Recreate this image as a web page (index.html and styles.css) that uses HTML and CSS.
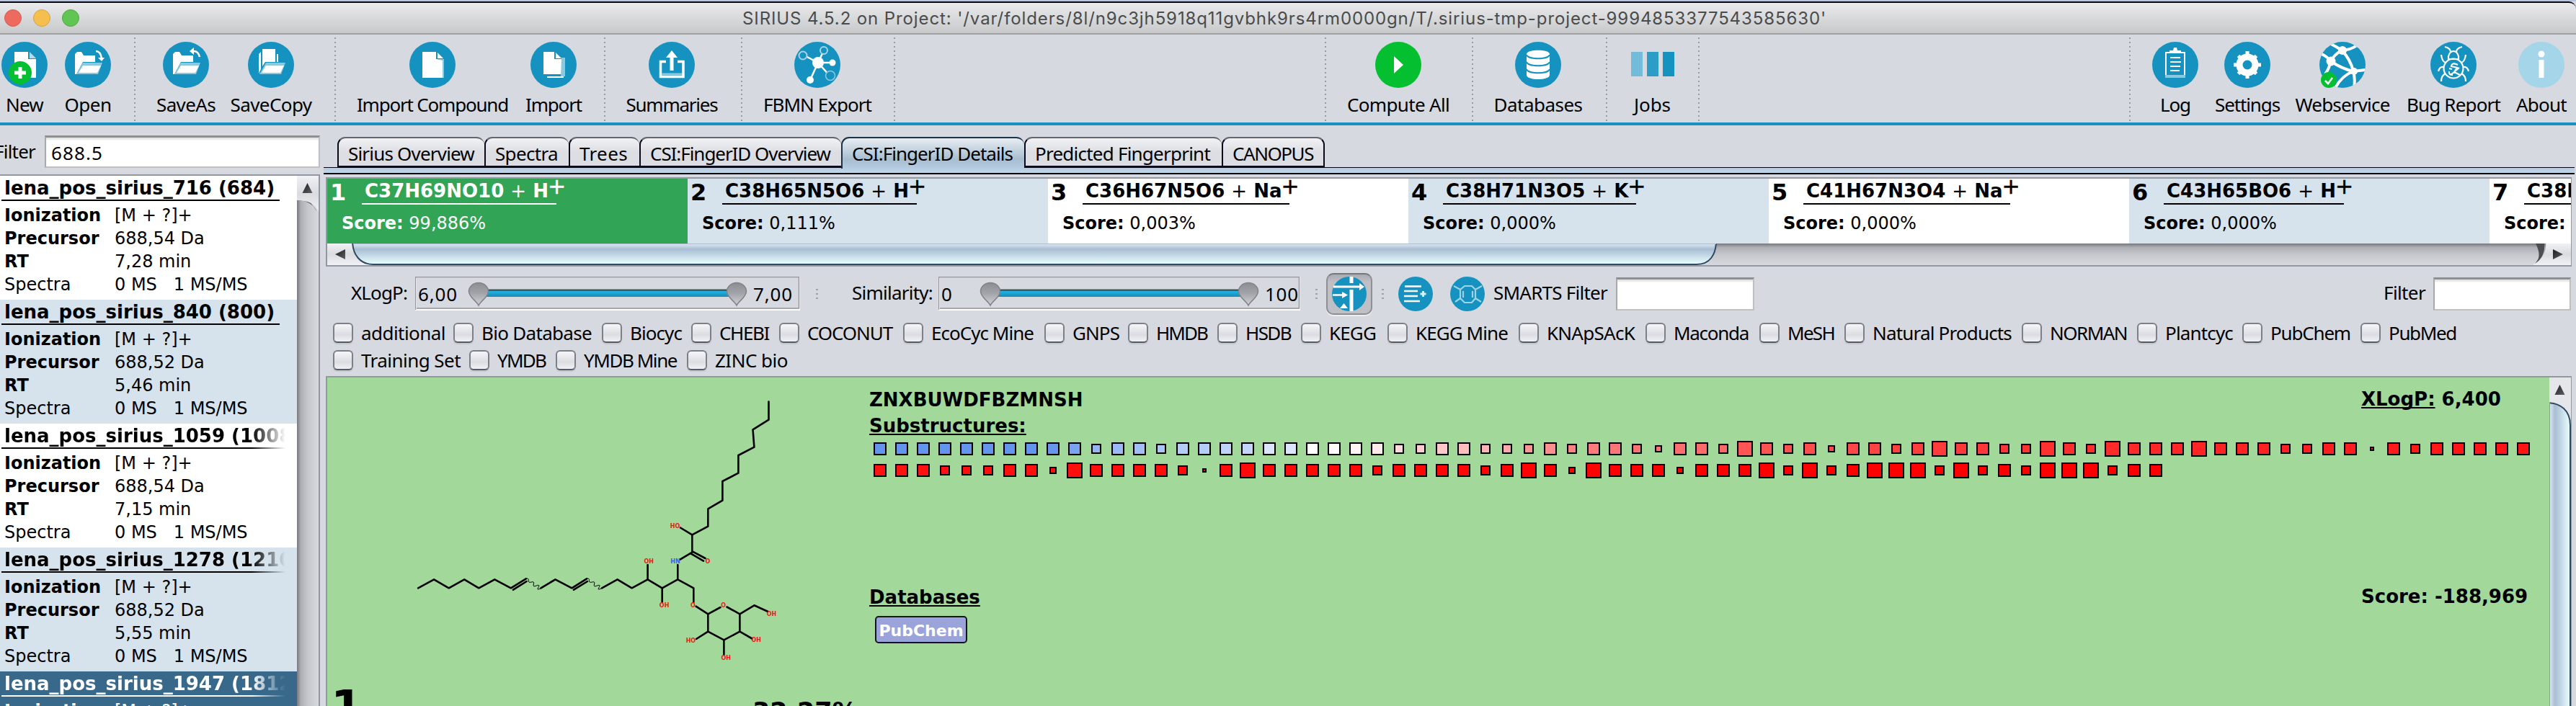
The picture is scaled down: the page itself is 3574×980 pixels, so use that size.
FILE: index.html
```html
<!DOCTYPE html>
<html lang="en">
<head>
<meta charset="utf-8">
<title>SIRIUS 4.5.2</title>
<link rel="stylesheet" href="styles.css">
</head>
<body>
<svg width="0" height="0" class="defs">
  <defs>
    <linearGradient id="bar" x1="0" y1="0" x2="0" y2="1"><stop offset="0" stop-color="#22b4e6"/><stop offset="1" stop-color="#1a8ab5"/></linearGradient>
    <linearGradient id="knob" x1="0" y1="0" x2="0" y2="1"><stop offset="0" stop-color="#8c8d91"/><stop offset=".45" stop-color="#a2a3a8"/><stop offset="1" stop-color="#d2d3d8"/></linearGradient>
    <linearGradient id="thumbH" x1="0" y1="0" x2="0" y2="1"><stop offset="0" stop-color="#f4f8fb"/><stop offset=".14" stop-color="#dbe7f1"/><stop offset=".36" stop-color="#a9bed3"/><stop offset="1" stop-color="#eaffff"/></linearGradient>
    <linearGradient id="thumbV" x1="0" y1="0" x2="1" y2="0"><stop offset="0" stop-color="#f4f8fb"/><stop offset=".14" stop-color="#dbe7f1"/><stop offset=".36" stop-color="#a9bed3"/><stop offset="1" stop-color="#eaffff"/></linearGradient>
    <linearGradient id="trackH" x1="0" y1="0" x2="0" y2="1"><stop offset="0" stop-color="#77797e"/><stop offset=".18" stop-color="#adafb4"/><stop offset=".5" stop-color="#c5c7cc"/><stop offset="1" stop-color="#d6d9df"/></linearGradient>
    <linearGradient id="trackV" x1="0" y1="0" x2="1" y2="0"><stop offset="0" stop-color="#77797e"/><stop offset=".18" stop-color="#adafb4"/><stop offset=".5" stop-color="#c5c7cc"/><stop offset="1" stop-color="#d6d9df"/></linearGradient>
    <linearGradient id="btn" x1="0" y1="0" x2="0" y2="1"><stop offset="0" stop-color="#f0f1f4"/><stop offset=".5" stop-color="#d9dbdf"/><stop offset="1" stop-color="#f1f2f4"/></linearGradient>
    <linearGradient id="arrow" x1="0" y1="0" x2="1" y2="1"><stop offset="0" stop-color="#1d1d1f"/><stop offset="1" stop-color="#5e6063"/></linearGradient>
    <path id="knobShape" d="M0 38.500C-3 32-13.500 27-13.500 19A13.500 12 0 0 1 13.500 19C13.500 27 3 32 0 38.500Z" fill="url(#knob)" stroke="#828388" stroke-width="1.500"/>
  </defs>
</svg>
<div class="window">
  <header class="titlebar">
    <div class="lights"><i class="light red"></i><i class="light yellow"></i><i class="light green"></i></div>
    <div class="caption" data-w="1501">SIRIUS 4.5.2 on Project: '/var/folders/8l/n9c3jh5918q11gvbhk9rs4rm0000gn/T/.sirius-tmp-project-9994853377543585630'</div>
  </header>

  <nav class="toolbar">
    <div class="tool"><svg viewBox="0 0 64 64"><circle cx="32" cy="32" r="32" fill="#1592c0"/><path d="M18 14H37V24H48V50H18Z" fill="#fff"/><path d="M39 14L48 23H39Z" fill="#b8dbe9"/><circle cx="26" cy="43" r="16" fill="#04c031"/><path d="M26 35V51M18 43H34" stroke="#fff" stroke-width="5"/></svg><span data-w="49">New</span></div>
    <div class="tool"><svg viewBox="0 0 64 64"><circle cx="32" cy="32" r="32" fill="#1592c0"/><path d="M14 17L17 14H23L26 19H42V28H25L16 45H14Z" fill="#fff"/><path d="M25 29H52L46 45H16Z" fill="#8cc8de"/><path d="M25 33H50L45 43H19Z" fill="#fff"/><path d="M43 13C48 13 50 17 51 23" fill="none" stroke="#fff" stroke-width="2.500"/><path d="M46 22H55L51 27Z" fill="#fff"/></svg><span data-w="62">Open</span></div>
    <i class="sep"></i>
    <div class="tool"><svg viewBox="0 0 64 64"><circle cx="32" cy="32" r="32" fill="#1592c0"/><path d="M14 17L17 14H23L26 19H42V28H25L16 45H14Z" fill="#fff"/><path d="M25 29H52L46 45H16Z" fill="#8cc8de"/><path d="M25 33H50L45 43H19Z" fill="#fff"/><path d="M43 13C48 13 50 17 51 21" fill="none" stroke="#fff" stroke-width="2.500"/><path d="M43 8V18L37 13Z" fill="#fff"/></svg><span data-w="79">SaveAs</span></div>
    <div class="tool"><svg viewBox="0 0 64 64"><circle cx="32" cy="32" r="32" fill="#1592c0"/><path d="M20 10H38V28H24L20 34ZM15 17L18 14V38L15 44ZM40 17H42V28H40Z" fill="#fff"/><path d="M25 29H52L46 45H16Z" fill="#8cc8de"/><path d="M25 33H50L45 43H19Z" fill="#fff"/></svg><span data-w="110">SaveCopy</span></div>
    <i class="sep"></i>
    <div class="tool"><svg viewBox="0 0 64 64"><circle cx="32" cy="32" r="32" fill="#1592c0"/><path d="M18 14H37V24H47V50H18Z" fill="#fff"/><path d="M39 15L47 23H39Z" fill="#fff"/><path d="M37 24H48V50H46V26Z" fill="#8cc8de"/></svg><span data-w="207">Import Compound</span></div>
    <div class="tool"><svg viewBox="0 0 64 64"><circle cx="32" cy="32" r="32" fill="#1592c0"/><path d="M18 14H33V24H43V45H18Z" fill="#fff"/><path d="M35 15L43 23H35Z" fill="#fff"/><path d="M43 22H48V48H42Z" fill="#8cc8de"/><path d="M23 49H46" stroke="#fff" stroke-width="2"/></svg><span data-w="75">Import</span></div>
    <i class="sep"></i>
    <div class="tool"><svg viewBox="0 0 64 64"><circle cx="32" cy="32" r="32" fill="#1592c0"/><path d="M24 27.500H16.500V48.500H48V27.500H40" fill="none" stroke="#fff" stroke-width="3.500"/><path d="M18 45H46" stroke="#8cc8de" stroke-width="3"/><path d="M32 20V40" stroke="#fff" stroke-width="5"/><path d="M24 22L32 12L40 22Z" fill="#fff"/></svg><span data-w="124">Summaries</span></div>
    <i class="sep"></i>
    <div class="tool"><svg viewBox="0 0 64 64"><circle cx="32" cy="32" r="32" fill="#1592c0"/><path d="M33 29L14 19M33 29L40 14M33 29L54 29M33 29L22 53M33 29L49 47" stroke="#fff" stroke-width="2.500"/><circle cx="33" cy="29" r="8" fill="#fff"/><circle cx="53" cy="29" r="4.500" fill="#fff"/><circle cx="22" cy="53" r="5" fill="#fff"/><circle cx="12" cy="19" r="5.500" fill="#1592c0" stroke="#a6d4e6" stroke-width="2"/><circle cx="41" cy="12" r="5" fill="#1592c0" stroke="#a6d4e6" stroke-width="2"/><circle cx="50" cy="47" r="6.500" fill="#1592c0" stroke="#8cc8de" stroke-width="1.500"/></svg><span data-w="147">FBMN Export</span></div>
    <i class="sep"></i>
    <i></i>
    <i class="sep"></i>
    <div class="tool"><svg viewBox="0 0 64 64"><circle cx="32" cy="32" r="32" fill="#04c031"/><path d="M26 20L39 32L26 44Z" fill="#fff"/></svg><span data-w="139">Compute All</span></div>
    <i class="sep"></i>
    <div class="tool"><svg viewBox="0 0 64 64"><circle cx="32" cy="32" r="32" fill="#1592c0"/><path d="M16 17C16 10 48 10 48 17V46C48 54 16 54 16 46Z" fill="#fff"/><path d="M16 18C18 25 46 25 48 18M16 28C18 35 46 35 48 28M16 38C18 45 46 45 48 38" fill="none" stroke="#1592c0" stroke-width="2"/></svg><span data-w="120">Databases</span></div>
    <i class="sep"></i>
    <div class="tool"><svg viewBox="0 0 64 64"><path d="M2 14H18V48H2Z" fill="#73bcd9"/><path d="M24 14H40V48H24Z" fill="#2c9dc6"/><path d="M46 14H62V48H46Z" fill="#1592c0"/></svg><span data-w="48">Jobs</span></div>
    <i class="sep"></i>
    <i></i>
    <i class="sep"></i>
    <div class="tool"><svg viewBox="0 0 64 64"><circle cx="32" cy="32" r="32" fill="#1592c0"/><path d="M19 14V49M45 14V49M18 15H24M40 15H46" stroke="#fff" stroke-width="2" fill="none"/><path d="M18 46H46V50H18Z" fill="#8cc8de"/><path d="M24 16V12H29L30 8H34L35 12H40V16Z" fill="#fff"/><path d="M25 22H39M25 28H40M25 34H39M25 40H38" stroke="#fff" stroke-width="2"/></svg><span data-w="39">Log</span></div>
    <div class="tool"><svg viewBox="0 0 64 64"><circle cx="32" cy="32" r="32" fill="#1592c0"/><circle cx="32" cy="32" r="15.500" fill="#fff"/><path d="M32 13V51M13 32H51" stroke="#fff" stroke-width="5"/><path d="M19.500 19.500L44.500 44.500M44.500 19.500L19.500 44.500" stroke="#fff" stroke-width="5"/><circle cx="32" cy="32" r="6.500" fill="#1592c0"/></svg><span data-w="87">Settings</span></div>
    <div class="tool"><svg viewBox="0 0 64 64"><clipPath id="globe"><circle cx="32" cy="32" r="32"/></clipPath><g clip-path="url(#globe)"><rect width="64" height="64" fill="#1592c0"/><path d="M16 3Q24 7 31 12Q44 11 52 5M31 12Q21 17 16 27Q10 20 3 17M16 27Q13 38 8 45M16 27Q30 37 47 41Q43 24 31 12M47 41L64 39M47 41Q31 47 22 64M47 41Q50 51 48 64" stroke="#fff" stroke-width="4" fill="none"/><circle cx="32" cy="12" r="6" fill="#fff"/><circle cx="16" cy="27" r="6.500" fill="#fff"/><circle cx="48" cy="41" r="5" fill="#fff"/></g><circle cx="13" cy="53" r="11" fill="#04c031"/><path d="M8 54L12 58L18 50" stroke="#fff" stroke-width="2.500" fill="none"/></svg><span data-w="128">Webservice</span></div>
    <div class="tool"><svg viewBox="0 0 64 64"><circle cx="32" cy="32" r="32" fill="#1592c0"/><g fill="none" stroke="#fff" stroke-width="2.200"><circle cx="32" cy="37" r="13.500"/><path d="M25 24V20Q27 13 32 13Q37 13 39 20V24ZM28 14Q28 9 20 7M36 14Q36 9 44 7M21 29Q16 27 15 18M43 29Q48 27 49 18M18 35Q13 34 11 41M46 35Q51 34 53 41M21 44Q15 47 15 55M43 44Q49 47 49 55"/><path d="M28 46L40 36M26 41Q25 46 31 46M38 32Q30 28 29 34L37 36L33 42L41 46M26 37L30 38"/></g></svg><span data-w="127">Bug Report</span></div>
    <div class="tool"><svg viewBox="0 0 64 64"><circle cx="32" cy="32" r="32" fill="#a4d5e8"/><circle cx="32" cy="17" r="4.500" fill="#fff"/><path d="M32 25V50" stroke="#fff" stroke-width="7"/></svg><span data-w="67">About</span></div>
  </nav>

  <div class="main">
    <aside class="left">
      <div class="filter-row"><div class="filter-label"><span data-w="54">Filter</span></div><div class="field"><span data-w="69">688.5</span></div></div>
      <div class="list-panel">
        <ul class="compounds">
          <li><h3>lena_pos_sirius_716 (684)</h3><dl><dt>Ionization</dt><dd>[M + ?]+</dd><dt>Precursor</dt><dd>688,54 Da</dd><dt>RT</dt><dd>7,28 min</dd><dt class="plain">Spectra</dt><dd>0 MS&nbsp;&nbsp; 1 MS/MS</dd></dl></li>
          <li class="alt"><h3>lena_pos_sirius_840 (800)</h3><dl><dt>Ionization</dt><dd>[M + ?]+</dd><dt>Precursor</dt><dd>688,52 Da</dd><dt>RT</dt><dd>5,46 min</dd><dt class="plain">Spectra</dt><dd>0 MS&nbsp;&nbsp; 1 MS/MS</dd></dl></li>
          <li><h3 class="fade">lena_pos_sirius_1059 (1008)</h3><dl><dt>Ionization</dt><dd>[M + ?]+</dd><dt>Precursor</dt><dd>688,54 Da</dd><dt>RT</dt><dd>7,15 min</dd><dt class="plain">Spectra</dt><dd>0 MS&nbsp;&nbsp; 1 MS/MS</dd></dl></li>
          <li class="alt"><h3 class="fade">lena_pos_sirius_1278 (1210)</h3><dl><dt>Ionization</dt><dd>[M + ?]+</dd><dt>Precursor</dt><dd>688,52 Da</dd><dt>RT</dt><dd>5,55 min</dd><dt class="plain">Spectra</dt><dd>0 MS&nbsp;&nbsp; 1 MS/MS</dd></dl></li>
          <li class="selected"><h3 class="fade">lena_pos_sirius_1947 (1812)</h3><dl><dt>Ionization</dt><dd>[M + ?]+</dd></dl></li>
        </ul>
        <svg class="vscroll" width="30" height="736" viewBox="0 0 30 736"><rect width="30" height="736" fill="url(#trackV)"/><path d="M0 34Q20 34 28 50L18 36Z" fill="#55575b"/><path d="M0 0H30V50Q24 34 0 34Z" fill="url(#btn)"/><path d="M14.500 10L21.500 24H7.500Z" fill="url(#arrow)"/></svg>
      </div>
    </aside>

    <section class="right">
      <div class="tabs">
        <div class="tab"><span data-w="172">Sirius Overview</span></div>
        <div class="tab"><span data-w="84">Spectra</span></div>
        <div class="tab"><span data-w="64">Trees</span></div>
        <div class="tab"><span data-w="247">CSI:FingerID Overview</span></div>
        <div class="tab active"><span data-w="220">CSI:FingerID Details</span></div>
        <div class="tab"><span data-w="240">Predicted Fingerprint</span></div>
        <div class="tab"><span data-w="109">CANOPUS</span></div>
      </div>
      <div class="tab-strip"></div>

      <div class="formula-panel">
        <div class="formulas">
          <article class="best"><b class="rank">1</b><div class="formula">C37H69NO10 <i>+</i> H<sup>+</sup></div><p><b>Score:</b> 99,886%</p></article>
          <article class="alt"><b class="rank">2</b><div class="formula">C38H65N5O6 <i>+</i> H<sup>+</sup></div><p><b>Score:</b> 0,111%</p></article>
          <article><b class="rank">3</b><div class="formula">C36H67N5O6 <i>+</i> Na<sup>+</sup></div><p><b>Score:</b> 0,003%</p></article>
          <article class="alt"><b class="rank">4</b><div class="formula">C38H71N3O5 <i>+</i> K<sup>+</sup></div><p><b>Score:</b> 0,000%</p></article>
          <article><b class="rank">5</b><div class="formula">C41H67N3O4 <i>+</i> Na<sup>+</sup></div><p><b>Score:</b> 0,000%</p></article>
          <article class="alt"><b class="rank">6</b><div class="formula">C43H65BO6 <i>+</i> H<sup>+</sup></div><p><b>Score:</b> 0,000%</p></article>
          <article><b class="rank">7</b><div class="formula">C38H</div><p><b>Score:</b></p></article>
        </div>
        <svg class="hscroll" width="3113" height="30" viewBox="0 0 3113 30"><rect width="3113" height="30" fill="url(#trackH)"/><path d="M0 0H66V30H0Z" fill="url(#btn)"/><path d="M11 15L25 8V22Z" fill="url(#arrow)"/><path d="M35 -4C35 16 46 29 64 29H1900C1918 29 1927 16 1927 -4Z" fill="url(#thumbH)" stroke="#2f4a62" stroke-width="2"/><path d="M36 .5H1927" stroke="#aebdca"/><path d="M3076 0Q3078 18 3062 30L3066 24Q3072 16 3064 0Z" fill="#4c4e52"/><path d="M3078 0H3113V30H3060Q3080 18 3078 0Z" fill="url(#btn)"/><path d="M3102 15L3088 8V22Z" fill="url(#arrow)"/></svg>
      </div>

      <div class="controls">
        <span class="lbl" data-w="75">XLogP:</span>
        <svg class="slider" width="534" height="48" viewBox="0 0 534 48"><path d="M1 1H533V46H1Z" fill="none" stroke="#fff" stroke-width="2"/><path d="M.5 46V.75H532.500V44H2" fill="none" stroke="#96979b" stroke-width="1.500"/><rect x="88" y="17.500" width="357" height="2.500" fill="#45565e"/><rect x="88" y="20" width="357" height="8" fill="url(#bar)"/><use href="#knobShape" x="88" y="1.500"/><use href="#knobShape" x="446" y="1.500"/><text x="4" y="34" textLength="54">6,00</text><text x="469" y="34" textLength="54">7,00</text></svg>
        <i class="dots"></i>
        <span class="lbl" data-w="109">Similarity:</span>
        <svg class="slider" width="502" height="48" viewBox="0 0 502 48"><path d="M1 1H501V46H1Z" fill="none" stroke="#fff" stroke-width="2"/><path d="M.5 46V.75H500.500V44H2" fill="none" stroke="#96979b" stroke-width="1.500"/><rect x="72" y="17.500" width="358" height="2.500" fill="#45565e"/><rect x="72" y="20" width="358" height="8" fill="url(#bar)"/><use href="#knobShape" x="72" y="1.500"/><use href="#knobShape" x="430" y="1.500"/><text x="4" y="34">0</text><text x="453" y="34" textLength="46">100</text></svg>
        <i class="dots"></i>
        <div class="toggle"><svg width="48" height="48" viewBox="0 0 48 48"><circle cx="24" cy="24" r="24" fill="#1592c0"/><path d="M27 0V9M27 18V48" stroke="#fff" stroke-width="5"/><path d="M2 14H41" stroke="#fff" stroke-width="3"/><path d="M38 9L45 14L38 19ZM14 21L22 25.500L14 30ZM11 44L16.500 37L22 44Z" fill="#fff"/><path d="M1 25.500H15" stroke="#fff" stroke-width="2.500"/></svg></div>
        <i class="dots"></i>
        <svg width="48" height="48" viewBox="0 0 48 48"><circle cx="24" cy="24" r="24" fill="#1592c0"/><path d="M9 13.500H32M8 20H27M8 27H27M8 34H30" stroke="#fff" stroke-width="2.400"/><path d="M34.500 20V28M30.500 24H38.500" stroke="#d9eef6" stroke-width="3"/></svg>
        <svg width="48" height="48" viewBox="0 0 48 48"><circle cx="24" cy="24" r="24" fill="#1592c0"/><g fill="none" stroke="#a0d2e5" stroke-width="2.200"><path d="M5 13L14 18L20 13H30L35 18L44 13M14 18V30L20 36H30L35 30V18M14 30L7 35M35 30L43 35M18 20V29M31 20V29"/></g></svg>
        <span class="lbl" data-w="155">SMARTS Filter</span>
        <div class="field small"></div>
        <span class="lbl" data-w="55">Filter</span>
        <div class="field small end"></div>
      </div>

      <div class="checks first">
        <label><i></i><span data-w="114">additional</span></label><label><i></i><span data-w="150">Bio Database</span></label><label><i></i><span data-w="69">Biocyc</span></label><label><i></i><span data-w="66">CHEBI</span></label><label><i></i><span data-w="115">COCONUT</span></label><label><i></i><span data-w="139">EcoCyc Mine</span></label><label><i></i><span data-w="62">GNPS</span></label><label><i></i><span data-w="68">HMDB</span></label><label><i></i><span data-w="60">HSDB</span></label><label><i></i><span data-w="62">KEGG</span></label><label><i></i><span data-w="125">KEGG Mine</span></label><label><i></i><span data-w="119">KNApSAcK</span></label><label><i></i><span data-w="101">Maconda</span></label><label><i></i><span data-w="62">MeSH</span></label><label><i></i><span data-w="190">Natural Products</span></label><label><i></i><span data-w="104">NORMAN</span></label><label><i></i><span data-w="91">Plantcyc</span></label><label><i></i><span data-w="108">PubChem</span></label><label><i></i><span data-w="91">PubMed</span></label>
      </div>
      <div class="checks second">
        <label><i></i><span data-w="135">Training Set</span></label><label><i></i><span data-w="64">YMDB</span></label><label><i></i><span data-w="126">YMDB Mine</span></label><label><i></i><span data-w="98">ZINC bio</span></label>
      </div>

      <div class="candidate">
        <svg class="structure" width="742" height="456" viewBox="454 524 742 456">
          <g fill="none" stroke="#000" stroke-width="2.600" stroke-linecap="round" stroke-linejoin="round">
            <path d="M1066.500 557.500V582.700L1044.500 596.300L1046.400 620.700L1024.400 632V656.700L1002.400 668V694.700L982.300 706.300V730.700L960.300 742.300V766.700L943.600 776.700M944 732.500L960.300 742.300M961 765.700L978.500 775M958.400 768.300L976 778.700"/>
            <path d="M940.300 784V804.300L962.300 816.300V836M940.300 804.300L918.700 816.300L898.600 804.300L876.600 816.300L856.600 804.300L835 816.300M898.600 784V804.300M918.700 816.300V836"/>
            <path d="M814 803.300L793.400 816.300L770.500 804.300L750.400 816.300M729.800 803.300L708.800 816.300L686.300 804.300L664.300 816.300L644.200 804.300L622.700 816.300L602.100 804.300L580.100 816.300M815 807L796 818.700M730.600 807L712 818.700"/>
            <path d="M965.600 841.700L982.300 852.300V876.700L1004.400 888.300L1026.400 876.700V852.300L1008.500 842.500M982.300 852.300L999.500 843M1026.400 852.300L1046.400 840.300L1065 848.700M1026.400 876.700L1043.500 886.500M1004.400 888.300V909M982.300 876.700L966 887"/>
          </g>
          <path d="M814 803.300q4-1 3.500 2.500t4 2.200t3 3t4 2t2.500 2.500t4 .8M729.800 803.300q4-1 3.500 2.500t4 2.200t3 3t4 2t2.500 2.500t4 .8" fill="none" stroke="#000" stroke-width="1"/>
          <g class="atoms">
            <text x="936.500" y="733.300">HO</text><text x="982" y="781.700">O</text><text x="900.300" y="782">OH</text><text x="921.600" y="843.300">OH</text><text x="961.300" y="843.300">O</text><text x="1003.600" y="843">O</text><text x="1070.400" y="854.500">OH</text><text x="1049.300" y="891.300">OH</text><text x="958.400" y="892">HO</text><text x="1007.300" y="916.300">OH</text><text x="937" y="782" class="nitrogen">HN</text>
          </g>
          <text x="459" y="1004" class="rank-big">1</text>
          <text x="1044" y="1000" class="percent">32.27%</text>
        </svg>
        <div class="details">
          <div class="pair"><b>ZNXBUWDFBZMNSH</b><b class="val"><u>XLogP:</u> 6,400</b></div>
          <div class="pair"><u>Substructures:</u></div>
          <div class="squares" id="squares"></div>
          <div class="pair low"><u>Databases</u><b class="val">Score: -188,969</b></div>
          <div class="badge">PubChem</div>
        </div>
        <svg class="vscroll" width="30" height="456" viewBox="0 0 30 456"><rect width="30" height="456" fill="url(#btn)"/><path d="M0 0H30V60H0Z" fill="#e4e6e9"/><path d="M14.500 10L21.500 24H7.500Z" fill="url(#arrow)"/><path d="M-4 35C16 35 29 46 29 66V470H-4Z" fill="url(#thumbV)" stroke="#2f4a62" stroke-width="2"/><path d="M.5 34V456" stroke="#8b9eb0"/></svg>
      </div>
    </section>
  </div>
</div>
<script src="app.js"></script>
</body>
</html>
```

FILE: styles.css
```css
* { box-sizing: border-box; margin: 0; padding: 0; }
body { width: 3574px; height: 980px; overflow: hidden; background: #d6d9df; color: #000; font: 26px/36px "Noto Sans", "Open Sans", sans-serif; }
i { font-style: normal; }
svg { display: block; }
.defs { position: absolute; }
.window { height: 980px; display: flex; flex-direction: column; border-top: 2px solid #b5c6e2; }

.titlebar { flex: none; height: 46px; display: grid; grid-template-columns: 1030px 1fr; align-items: center; background: linear-gradient(#e9eaeb, #c8c9ca); border-top: 2px solid #05060f; border-bottom: 2px solid #a1a1a2; border-top-right-radius: 10px; }
.lights { display: flex; gap: 16px; padding-left: 6px; }
.light { width: 24px; height: 24px; border-radius: 50%; border: 1px solid #d85a50; background: #ed6a5e; }
.light.yellow { background: #f5bf4f; border-color: #d9a441; }
.light.green { background: #61c554; border-color: #51a73f; }
.caption { justify-self: start; padding-top: 2px; font: 24px/36px Inter, "Liberation Sans", sans-serif; color: #4a4b4c; white-space: nowrap; }

.toolbar { flex: none; height: 126px; border-bottom: 4px solid #1592c0; display: grid; grid-template-columns: 68px 108px 22px 120px 116px 62px 208px 128px 14px 172px 22px 188px 26px 572px 26px 176px 30px 152px 38px 89px 40px 567px 22px 104px 96px 168px 140px 104px; }
.tool { display: flex; flex-direction: column; align-items: center; padding-top: 10px; white-space: nowrap; }
.tool svg { width: 64px; height: 64px; flex: none; margin-bottom: 5px; }
.sep { justify-self: center; width: 2px; margin: 4px 0 1px; background: repeating-linear-gradient(#979ba5 0 2px, transparent 2px 6px); }

.main { flex: 1; display: grid; grid-template-columns: 444px 1fr; column-gap: 5px; min-height: 0; }
.left { overflow: hidden; }
.filter-row { height: 68px; display: grid; grid-template-columns: 62px 382px; padding-top: 14px; align-items: start; }
.filter-label { display: flex; justify-content: flex-end; padding-right: 13px; line-height: 44px; }
.field { height: 45px; background: #fff; border: 2px solid #c0c0c2; border-top: 3px solid #8d8f90; border-left-color: #a9aaac; padding: 0 7px; line-height: 42px; box-shadow: inset 0 3px 2px #e4e6e6; }
.list-panel { display: grid; grid-template-columns: 412px 30px; border-top: 2px solid #9297a1; border-right: 2px solid #9297a1; height: 740px; }
.compounds { list-style: none; background: #fff; font: 24px/32px "DejaVu Sans", sans-serif; }
.compounds li { height: 172px; }
.compounds .alt, .formulas .alt { background: #d6e3ed; }
.compounds .selected { background: #39698a; color: #fff; height: 60px; }
.compounds h3 { width: 386px; margin-left: 2px; padding-left: 4px; height: 35px; font: bold 26px/34px "DejaVu Sans", sans-serif; border-bottom: 2px solid; white-space: nowrap; overflow: hidden; }
.compounds h3.fade { width: 394px; mask-image: linear-gradient(90deg, #000 88%, transparent 100%); -webkit-mask-image: linear-gradient(90deg, #000 88%, transparent 100%); }
.compounds dl { display: grid; grid-template-columns: 153px 1fr; padding: 4px 0 0 6px; white-space: nowrap; }
.compounds dt { font-weight: bold; }
.compounds dt.plain { font-weight: normal; }

.right { display: flex; flex-direction: column; min-width: 0; }
.tabs { height: 58px; padding: 16px 0 0 19px; display: grid; grid-template-columns: 204px 117px 98px 280px 254px 274px 143px; }
.tab { height: 42px; border: 2px solid #0a0a1c; border-top: 2px solid #62666e; border-right-width: 0; border-radius: 11px 11px 0 0; background: linear-gradient(#f2f2f5, #dddee3 50%, #dcdde2); padding-left: 13px; line-height: 43px; white-space: nowrap; }
.tab:last-child { border-right-width: 2px; }
.tab.active { height: 44px; border-bottom: 0; border-color: #1c3247; background: linear-gradient(#e8edf2, #a7bdd0 70%, #b7cce2); position: relative; }
.tab-strip { flex: none; height: 10px; border-top: 1px solid #05060f; border-bottom: 2px solid #05060f; background: linear-gradient(#b5cbe1, #c0d6ea); margin-right: 2px; }

.formula-panel { flex: none; margin: 4px 6px 0 3px; height: 124px; border: 2px solid #9297a1; border-right-width: 1px; overflow: hidden; }
.formulas { height: 90px; display: grid; grid-template-columns: repeat(6, 500px) 113px; font-family: "DejaVu Sans", sans-serif; }
.formulas article { display: grid; grid-template: 46px 44px / 44px 1fr; padding-left: 4px; background: #fff; white-space: nowrap; overflow: hidden; }
.formulas .best { background: #32a455; color: #fff; }
.rank { font-size: 32px; line-height: 38px; }
.formula { justify-self: start; position: relative; height: 36px; font-weight: bold; font-size: 26px; line-height: 34px; padding: 0 11px 0 4px; border-bottom: 2px solid; }
.formula i { font-weight: normal; }
.formula sup { position: absolute; left: 100%; top: 2px; margin-left: -12px; font-weight: normal; font-size: 30px; line-height: 18px; -webkit-text-stroke: .5px; }
.formulas p { grid-column: 1 / 3; padding-left: 16px; font-size: 24px; line-height: 32px; }

.controls { flex: none; height: 76px; margin: 0 0 -3px 38px; display: grid; align-items: center; justify-items: start; grid-template-columns: 89px 556px 50px 120px 523px 15px 77px 23px 72px 60px 170px 1065px 69px 191px; }
.lbl { margin-bottom: 4px; white-space: nowrap; }
.slider text { font: 26px "Noto Sans", sans-serif; }
.dots { width: 3px; height: 14px; background: repeating-linear-gradient(#9da1aa 0 2px, transparent 2px 6px); }
.toggle { width: 64px; height: 58px; border-radius: 10px; border: 2px solid #8e8f93; border-top-color: #77787c; background: linear-gradient(#a9abb2, #bfc0c6 20%, #bfc0c6); padding: 3px 6px; box-shadow: 0 2px 0 #eceef1; }
.field.small { width: 192px; height: 46px; }
.field.end { width: 191px; }

.checks { flex: none; height: 38px; padding-left: 13px; display: grid; }
.checks.first { grid-template-columns: 167px 206px 124px 122px 172px 196px 116px 124px 116px 120px 182px 176px 158px 118px 246px 160px 146px 164px 200px; }
.checks.second { grid-template-columns: 189px 120px 182px 200px; }
.checks label { display: flex; align-items: center; gap: 11px; white-space: nowrap; }
.checks i { flex: none; width: 28px; height: 28px; border: 2px solid #7c8089; border-bottom-color: #565a63; border-radius: 6px; background: linear-gradient(#f6f6f9, #dcdde1 60%, #f0f1f5); box-shadow: 0 2px 1px #c3c6cc; }

.candidate { flex: none; margin: 3px 6px 0 3px; height: 458px; display: grid; grid-template-columns: 742px 1fr 30px; border: 2px solid #9297a1; border-right-width: 1px; border-bottom: 0; background: #a2d99b; font: bold 26px/36px "DejaVu Sans", sans-serif; overflow: hidden; }
.atoms text { font: bold 8px "DejaVu Sans", sans-serif; fill: #f21616; text-anchor: middle; }
.atoms .nitrogen { fill: #3a5ff0; }
.rank-big { font: bold 64px "DejaVu Sans", sans-serif; }
.percent { font: bold 35px "DejaVu Sans", sans-serif; }
.details { padding: 13px 0 0 10px; }
.pair { display: grid; grid-template-columns: 2070px 1fr; white-space: nowrap; }
.pair u, .pair b { justify-self: start; }
.pair u { text-decoration-thickness: 2px; text-underline-offset: 2px; text-decoration-skip-ink: none; }
.pair .val { margin-top: -1px; }
.squares { display: grid; grid-template-columns: repeat(77, 30px); grid-auto-rows: 30px; place-items: center; margin-top: -1px; }
.sq { border: 2px solid #000; grid-row: 1; }
.sq.second { grid-row: 2; }
.N { width: 18px; height: 18px; }
.S { width: 14px; height: 14px; }
.T { width: 10px; height: 10px; }
.D { width: 6px; height: 6px; }
.B { width: 22px; height: 22px; }
.low { margin-top: 143px; }
.badge { margin: 8px 0 0 8px; width: 128px; height: 38px; border: 2px solid #14141c; border-radius: 5px; background: #9ba4da; color: #fff; font-size: 22px; line-height: 38px; text-align: center; }
```

FILE: app.js
```javascript
// Substructure squares: one letter per square gives its size class.
const sizes = [
  "NNNNNNNNNNSNNSNNNNNNNNNNSSNNSSSNSNNSTNNSBNSNTNNSNBNNSSBNSBNNNBNNNSSNNDNSNNNNN",
  "NNNSSSNNTBNNNNSDNBNNNNNSNNNNSNBNTBNNNTNNNBSBSNBBBSBSNSBBBSNN"
];
const early = ["#6495ed","#6495ed","#6495ed","#6495ed","#6495ed","#6495ed","#6495ed","#6495ed","#6697ec","#7ba4f0","#94b5f3","#9bb9f4","#a2bff5","#aac6f6","#b3ccf8","#b4cdf8","#bfd3f9","#c3d6f9","#d9e6fb","#dbe6fc","#ffffff","#fff9f9","#fff4f4","#ffebeb","#ffdada","#ffcdcd","#ffc8c8","#ffbebe","#ffb4b4","#ffaaaa","#ff9696","#ff8f8f","#ff8282","#ff7a7a"];
const stops = [[34, 0x76], [39, 0x68], [40, 0x55], [49, 0x3b], [54, 0x30], [61, 0x25], [76, 0x14]];

function squareColor(row, i) {
  if (row === 1) {
    const v = Math.max(0, Math.round(18 - i * 0.5));
    return `rgb(255,${v},${v})`;
  }
  if (i < early.length) return early[i];
  const k = stops.findIndex(s => s[0] >= i);
  const [x1, v1] = stops[k], [x0, v0] = stops[Math.max(0, k - 1)];
  const v = x1 === x0 ? v1 : Math.round(v0 + (v1 - v0) * (i - x0) / (x1 - x0));
  return `rgb(255,${v},${v})`;
}

const host = document.getElementById("squares");
sizes.forEach((line, row) => {
  [...line].forEach((s, i) => {
    const el = document.createElement("i");
    el.className = "sq " + s + (row ? " second" : "");
    el.style.backgroundColor = squareColor(row, i);
    host.append(el);
  });
});

// Tracks each label so that it takes its nominal width.
document.querySelectorAll("[data-w]").forEach(el => {
  const range = document.createRange();
  range.selectNodeContents(el);
  const natural = range.getBoundingClientRect().width;
  const n = el.textContent.length;
  el.style.letterSpacing = ((Number(el.dataset.w) + 3 - natural) / n).toFixed(3) + "px";
});
```
